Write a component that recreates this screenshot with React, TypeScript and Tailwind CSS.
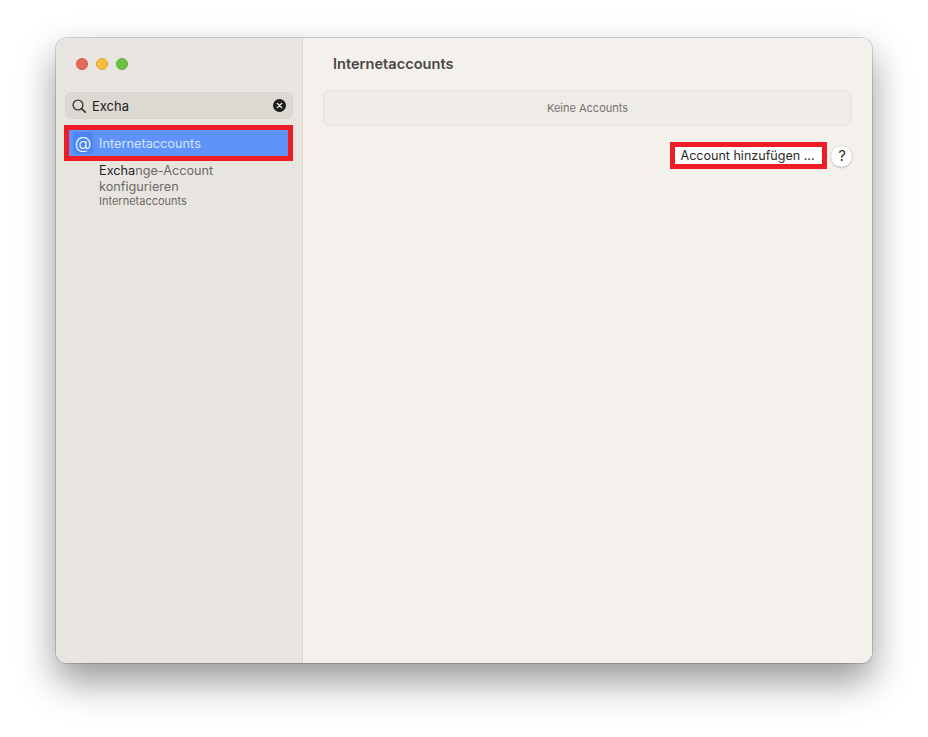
function Sidebar() {
  return (
    <div className="flex h-full w-[247px] shrink-0 flex-col border-r border-[#dbd8d2] bg-[#e8e5e0] pl-[8px] pr-[8px]">
      <div className="flex h-[25px] mt-[13px] items-center gap-2 pl-[12px]">
        <span className="h-3 w-3 rounded-full border border-[#d2574a] bg-[#e5695a]" />
        <span className="h-3 w-3 rounded-full border border-[#dca635] bg-[#f3bf42]" />
        <span className="h-3 w-3 rounded-full border border-[#5eab38] bg-[#6cc043]" />
      </div>
      <div className="mt-[16px] ml-px flex h-[27px] w-[228px] items-center rounded-md border border-[#d8d5cf] bg-[#dcd9d3] pl-[5px] pr-[6px]">
        <svg viewBox="0 0 16 16" className="h-[16px] w-[16px]" fill="none" stroke="#3a3a3a" strokeWidth="1.4" strokeLinecap="round">
          <circle cx="7" cy="7" r="4.9" />
          <path d="M10.6 10.6l3.6 3.6" strokeWidth="1.8" />
        </svg>
        <span className="ml-[5px] flex-1 text-[13px] leading-[16px] text-[#222]">Excha</span>
        <span className="flex h-[13px] w-[13px] items-center justify-center rounded-full bg-[#1e1e1e]">
          <svg viewBox="0 0 8 8" className="h-[7px] w-[7px]">
            <path d="M1.5 1.5l5 5M6.5 1.5l-5 5" stroke="#fff" strokeWidth="1.4" strokeLinecap="round" />
          </svg>
        </span>
      </div>
      <div className="mt-[6px] flex h-[36px] w-[229px] items-center border-[5px] border-[#ee1c25] bg-[#5f93fb] pl-[4px]">
        <span className="flex h-[22px] w-[20px] items-center justify-center rounded-[4px] bg-[#4c86f5] text-[17px] font-light leading-none text-white">
          @
        </span>
        <span className="ml-[6px] pt-[2px] text-[12.75px] text-[#d6e3fd]">Internetaccounts</span>
      </div>
      <div className="ml-[35px] mt-[2px] w-[150px]">
        <div className="text-[12.7px] leading-[16px] text-[#6c6a67]">
          <div>
            <span className="text-[#1f1f1f]">Excha</span>nge-Account
          </div>
          <div>konfigurieren</div>
        </div>
        <div className="text-[11px] leading-[13px] text-[#6c6a67]">Internetaccounts</div>
      </div>
    </div>
  )
}

function Content() {
  return (
    <div className="flex h-full flex-1 flex-col bg-[#f4f1ec] pl-[20px] pr-[20px]">
      <div className="mt-[17px] pl-[10px] text-[14.6px] font-semibold leading-[18px] text-[#4a4845]">
        Internetaccounts
      </div>
      <div className="mt-[17px] flex h-[36px] items-center justify-center rounded-[5px] border border-[#e6e3dd] bg-[#efece7] text-[11px] text-[#757370]">
        Keine Accounts
      </div>
      <div className="mt-[16px] flex items-center justify-end gap-[4px]">
        <div className="flex h-[27px] w-[157px] items-center justify-center border-[5px] border-[#ee1c25] bg-white pr-[2px] pt-px text-[12.55px] text-[#2a2a2a]">
          Account hinzufügen ...
        </div>
        <div className="mt-px flex h-[21px] w-[21px] items-center justify-center rounded-full bg-white pl-px text-[15px] text-[#333] shadow-[0_0.5px_2px_rgba(0,0,0,0.35)]">
          ?
        </div>
      </div>
    </div>
  )
}

export default function App() {
  return (
    <div className="h-[737px] w-[928px] overflow-hidden bg-white pl-[56px] pt-[38px] font-['Inter','Liberation_Sans',sans-serif]">
      <div className="flex h-[625px] w-[816px] overflow-hidden rounded-[11px] shadow-[0_0_0_1px_rgba(0,0,0,0.16),0_18px_38px_rgba(0,0,0,0.42)]">
        <Sidebar />
        <Content />
      </div>
    </div>
  )
}
